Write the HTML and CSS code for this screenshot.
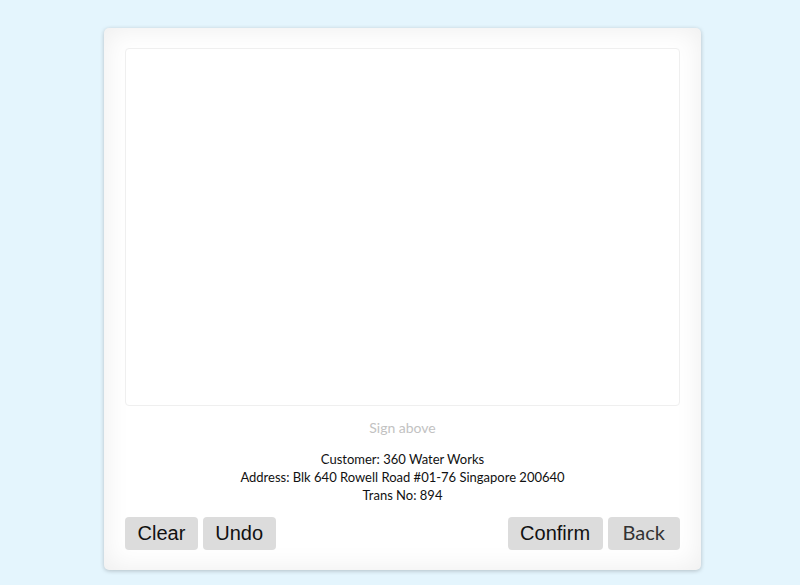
FILE: index.html
```html
<!DOCTYPE html>
<html>
<head>
<meta charset="utf-8">
<link rel="stylesheet" href="styles.css">
</head>
<body>
<div class="card">
  <div class="pad"></div>
  <div class="hint">Sign above</div>
  <div class="info">
    <div>Customer: 360 Water Works</div>
    <div>Address: Blk 640 Rowell Road #01-76 Singapore 200640</div>
    <div>Trans No: 894</div>
  </div>
  <div class="actions">
    <div class="group">
      <button class="btn">Clear</button>
      <button class="btn">Undo</button>
    </div>
    <div class="group">
      <button class="btn">Confirm</button>
      <button class="btn alt">Back</button>
    </div>
  </div>
</div>
</body>
</html>
```
FILE: styles.css
```css
html, body {
  margin: 0;
  padding: 0;
  background: #e4f5fd;
  height: 100%;
}
body {
  font-family: "Lato", "Noto Sans", sans-serif;
  padding-top: 28px;
  box-sizing: border-box;
}
.card {
  width: 597px;
  height: 542px;
  margin-left: 104px;
  box-sizing: border-box;
  padding: 20px 21px 21px 21px;
  background: #fff;
  border-radius: 5px;
  box-shadow: 0 1px 4px rgba(0,0,0,0.22), inset 0 0 28px rgba(0,0,0,0.075);
  display: flex;
  flex-direction: column;
}
.pad {
  height: 358px;
  flex: none;
  background: #fff;
  border: 1px solid #efefef;
  border-radius: 4px;
  box-sizing: border-box;
}
.hint {
  margin-top: 13px;
  text-align: center;
  color: #c2c2c2;
  font-size: 14px;
  line-height: 18px;
}
.info {
  margin-top: 13px;
  text-align: center;
  color: #111;
  font-size: 13px;
  line-height: 18px;
}
.actions {
  margin-top: 13px;
  display: flex;
  justify-content: space-between;
}
.group {
  display: flex;
  gap: 5px;
}
.btn {
  height: 33px;
  border: none;
  border-radius: 4px;
  background: #dcdcdc;
  font-family: "Liberation Sans", Arial, sans-serif;
  font-size: 20px;
  line-height: 33px;
  color: #111;
  padding: 0 12.5px;
  margin: 0;
  display: flex;
  align-items: center;
}
.alt {
  font-family: "Lato", "Noto Sans", sans-serif;
  color: #333;
  padding: 0 15px 3px 15px;
  line-height: 28px;
}
```
